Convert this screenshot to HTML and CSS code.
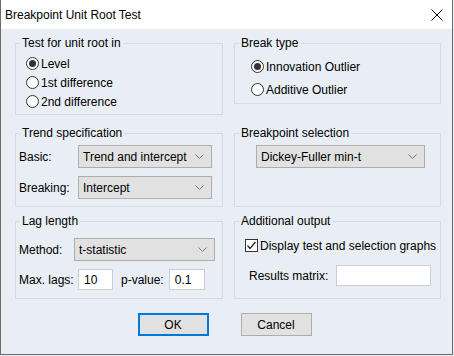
FILE: index.html
```html
<!DOCTYPE html>
<html lang="en">
  <head>
    <meta charset="UTF-8" />
    <title>Breakpoint Unit Root Test</title>
    <link rel="stylesheet" href="styles.css">
  </head>
  <body>
    <div class="window">
      <div class="titlebar">
        <span class="title">Breakpoint Unit Root Test</span>
        <svg class="close" width="12" height="12" viewBox="0 0 12 12">
          <path d="M0.5 0.5 L11.5 11.5 M11.5 0.5 L0.5 11.5" stroke="#000" stroke-width="1" />
        </svg>
      </div>

      <div class="content">
        <div class="row row1">
          <fieldset class="group">
            <legend>Test for unit root in</legend>
            <div class="inner unit-root">
              <label class="radio"><span class="dot checked"></span>Level</label>
              <label class="radio"><span class="dot"></span>1st difference</label>
              <label class="radio"><span class="dot"></span>2nd difference</label>
            </div>
          </fieldset>
          <fieldset class="group">
            <legend>Break type</legend>
            <div class="inner break-type">
              <label class="radio"><span class="dot checked"></span>Innovation Outlier</label>
              <label class="radio"><span class="dot"></span>Additive Outlier</label>
            </div>
          </fieldset>
        </div>

        <div class="row row2">
          <fieldset class="group">
            <legend>Trend specification</legend>
            <div class="inner trend">
              <div class="field">
                <span class="lbl">Basic:</span>
                <div class="select w134">Trend and intercept
                  <svg class="arrow" width="9" height="5" viewBox="0 0 9 5"><path d="M0.5 0.5 L4.5 4.5 L8.5 0.5" fill="none" stroke="#777" /></svg>
                </div>
              </div>
              <div class="field">
                <span class="lbl">Breaking:</span>
                <div class="select w134">Intercept
                  <svg class="arrow" width="9" height="5" viewBox="0 0 9 5"><path d="M0.5 0.5 L4.5 4.5 L8.5 0.5" fill="none" stroke="#777" /></svg>
                </div>
              </div>
            </div>
          </fieldset>
          <fieldset class="group">
            <legend>Breakpoint selection</legend>
            <div class="inner breakpoint">
              <div class="select w169">Dickey-Fuller min-t
                <svg class="arrow" width="9" height="5" viewBox="0 0 9 5"><path d="M0.5 0.5 L4.5 4.5 L8.5 0.5" fill="none" stroke="#777" /></svg>
              </div>
            </div>
          </fieldset>
        </div>

        <div class="row row3">
          <fieldset class="group">
            <legend>Lag length</legend>
            <div class="inner lag">
              <div class="field">
                <span class="lbl short">Method:</span>
                <div class="select w141">t-statistic
                  <svg class="arrow" width="9" height="5" viewBox="0 0 9 5"><path d="M0.5 0.5 L4.5 4.5 L8.5 0.5" fill="none" stroke="#777" /></svg>
                </div>
              </div>
              <div class="field lags">
                <span class="lbl">Max. lags:</span>
                <div class="input w35">10</div>
                <span class="lbl pval">p-value:</span>
                <div class="input w36">0.1</div>
              </div>
            </div>
          </fieldset>
          <fieldset class="group">
            <legend>Additional output</legend>
            <div class="inner additional">
              <label class="check">
                <svg class="box" width="13" height="13" viewBox="0 0 13 13">
                  <rect x="0.5" y="0.5" width="12" height="12" fill="#fff" stroke="#333" />
                  <path d="M2.5 6.5 L5 9.5 L10.5 3" fill="none" stroke="#222" stroke-width="1.2" />
                </svg>Display test and selection graphs
              </label>
              <div class="field matrix">
                <span class="lbl">Results matrix:</span>
                <div class="input w95"></div>
              </div>
            </div>
          </fieldset>
        </div>

        <div class="buttons">
          <button class="btn default">OK</button>
          <button class="btn">Cancel</button>
        </div>
      </div>
    </div>
  </body>
</html>
```

FILE: styles.css
```css
body {
  margin: 0;
  background-color: #e8eef4;
  font-family: "Liberation Sans", Arial, sans-serif;
  font-size: 12px;
  color: #000;
}

.window {
  width: 453px;
  height: 355px;
  box-sizing: border-box;
  border: 1px solid #6b6b6b;
  border-top: none;
  background-color: #e8eef4;
}

.titlebar {
  height: 29px;
  background-color: #fff;
  display: flex;
  align-items: center;
  justify-content: space-between;
  padding: 0 9px 0 4px;
}

.close {
  display: block;
}

.content {
  padding: 7px 0 0 14px;
}

.row {
  display: grid;
  grid-template-columns: 208px 207px;
  column-gap: 11px;
  align-items: start;
}

.row2 {
  margin-top: 11px;
}

.row3 {
  margin-top: 7px;
}

.group {
  margin: 0;
  padding: 0;
  border: 1px solid #d3dbe4;
  min-width: 0;
}

.group legend {
  margin-left: 4px;
  padding: 0 2px;
  line-height: 15px;
}

.inner {
  box-sizing: border-box;
}

.radio {
  display: flex;
  align-items: center;
  height: 19px;
}

.dot {
  width: 13px;
  height: 13px;
  box-sizing: border-box;
  border: 1px solid #333;
  border-radius: 50%;
  background-color: #fff;
  margin-right: 2px;
  display: flex;
  align-items: center;
  justify-content: center;
}

.dot.checked::after {
  content: "";
  width: 7px;
  height: 7px;
  border-radius: 50%;
  background-color: #333;
}

.unit-root {
  height: 63px;
  padding: 3px 0 0 10px;
}

.break-type {
  height: 52px;
  padding: 4px 0 0 16px;
}

.break-type .radio {
  height: 23px;
}

.trend,
.breakpoint {
  height: 65px;
  padding-top: 4px;
}

.trend {
  padding-left: 3px;
}

.breakpoint {
  padding-left: 21px;
}

.field {
  display: flex;
  align-items: center;
}

.field + .field {
  margin-top: 8px;
}

.lbl {
  width: 59px;
}

.lbl.short {
  width: 55px;
}

.select {
  height: 23px;
  box-sizing: border-box;
  border: 1px solid #adadad;
  background-color: #e1e1e1;
  display: flex;
  align-items: center;
  justify-content: space-between;
  padding: 0 7px 0 4px;
}

.w134 {
  width: 134px;
}

.w169 {
  width: 169px;
}

.w141 {
  width: 141px;
}

.input {
  height: 21px;
  box-sizing: border-box;
  border: 1px solid #c8ced6;
  background-color: #fff;
  padding: 0 5px;
  display: flex;
  align-items: center;
}

.w35 {
  width: 35px;
}

.w36 {
  width: 36px;
}

.w95 {
  width: 95px;
}

.lag,
.additional {
  height: 69px;
  padding-top: 9px;
}

.lag {
  padding-left: 3px;
}

.lag .lbl.pval {
  width: auto;
  margin: 0 5px 0 8px;
}

.additional {
  padding-left: 10px;
}

.check {
  display: flex;
  align-items: center;
  height: 15px;
}

.check .box {
  margin-right: 2px;
}

.matrix {
  margin-top: 12px;
  padding-left: 4px;
}

.matrix .lbl {
  width: 87px;
}

.buttons {
  display: flex;
  justify-content: center;
  gap: 32px;
  margin-top: 14px;
  padding-right: 18px;
}

.btn {
  width: 71px;
  height: 23px;
  box-sizing: border-box;
  border: 1px solid #adadad;
  background-color: #e1e1e1;
  font-family: inherit;
  font-size: 12px;
  padding: 0;
}

.btn.default {
  border: 2px solid #0078d7;
}
```
